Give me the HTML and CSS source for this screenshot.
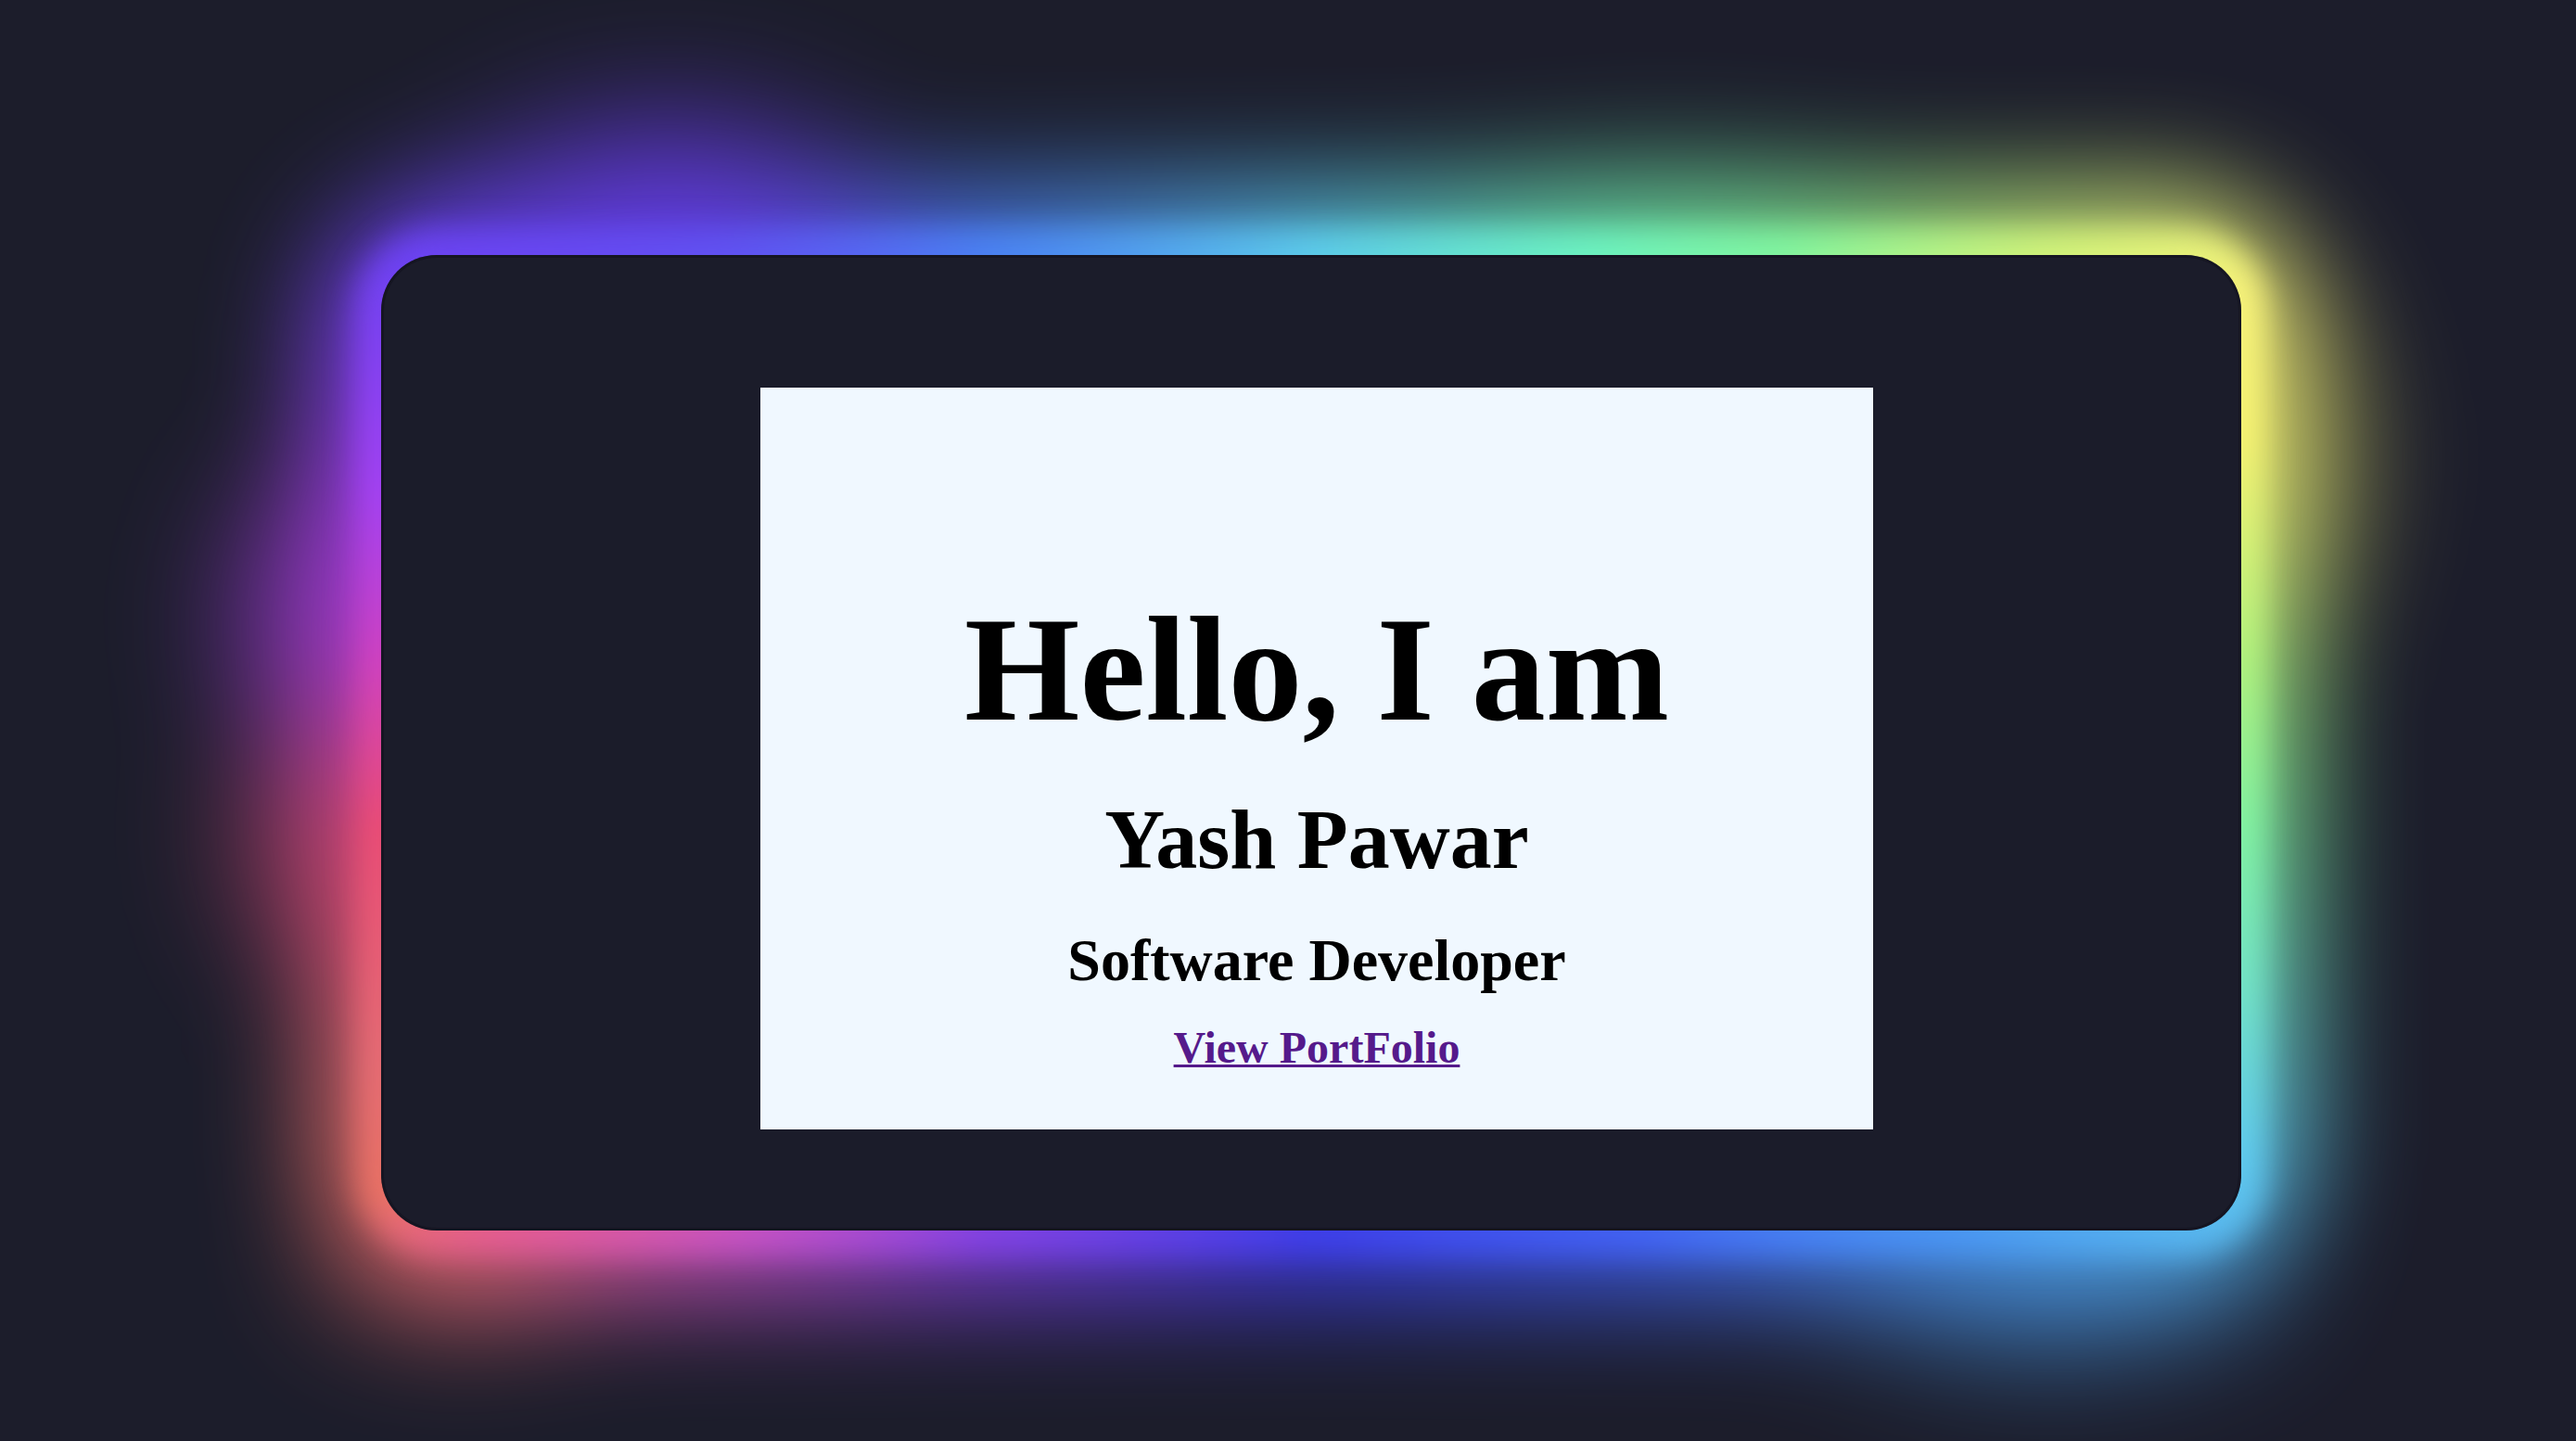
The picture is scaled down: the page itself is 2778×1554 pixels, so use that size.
FILE: index.html
```html
<!DOCTYPE html>
<html lang="en">
<head>
<meta charset="utf-8">
<title>Yash Pawar</title>
<link rel="stylesheet" href="styles.css">
</head>
<body>
  <main class="card">
    <section class="intro">
      <h1 class="hello">Hello, I am</h1>
      <h2 class="name">Yash Pawar</h2>
      <h3 class="role">Software Developer</h3>
      <p class="link-row"><a class="portfolio" href="#">View PortFolio</a></p>
    </section>
  </main>
</body>
</html>
```

FILE: styles.css
```css
html, body {
  margin: 0;
  height: 100%;
}

body {
  background: #1c1d2b;
  display: flex;
  justify-content: center;
  align-items: center;
  min-height: 100vh;
  box-sizing: border-box;
  padding: 48px 0 0 50px;
  overflow: hidden;
  font-family: "Liberation Serif", "Times New Roman", serif;
}

.card {
  position: relative;
  width: 1200px;
  height: 800px;
  padding: 143px 397px 109px 409px;
  background: #1b1c2a;
  border-radius: 60px;
  box-shadow: inset 0 0 0 3px rgba(12, 12, 22, 0.4);
  flex: none;
}

/* wide, soft halo with irregular bulges */
.card::before {
  content: "";
  position: absolute;
  inset: -250px;
  padding: 178px;
  border-radius: 330px;
  z-index: -1;
  filter: blur(60px);
  opacity: 0.92;
  background:
    radial-gradient(ellipse 280px 140px at 560px 190px, rgba(108, 60, 245, 1), rgba(108, 60, 245, 0) 100%),
    radial-gradient(ellipse 150px 220px at 190px 640px, rgba(172, 62, 236, 0.9), rgba(172, 62, 236, 0) 100%),
    radial-gradient(ellipse 150px 200px at 200px 880px, rgba(228, 76, 132, 0.85), rgba(228, 76, 132, 0) 100%),
    radial-gradient(ellipse 300px 90px at 1640px 215px, rgba(120, 240, 168, 0.6), rgba(120, 240, 168, 0) 100%),
    radial-gradient(ellipse 110px 240px at 2310px 470px, rgba(240, 240, 112, 0.7), rgba(240, 240, 112, 0) 100%),
    radial-gradient(ellipse 300px 110px at 2050px 1370px, rgba(74, 160, 240, 0.75), rgba(74, 160, 240, 0) 100%),
    radial-gradient(ellipse 200px 90px at 330px 1350px, rgba(232, 112, 96, 0.7), rgba(232, 112, 96, 0) 100%),
    conic-gradient(
      from 0deg,
      #5ac8ea 0deg,
      #6cf0b0 34deg,
      #8cf08c 46deg,
      #cdf07a 57deg,
      #f5f07a 64deg,
      #f2f070 72deg,
      #a8f080 85deg,
      #80f0a0 95deg,
      #70e0c8 105deg,
      #5ec8ea 114deg,
      #4a90f0 127deg,
      #4060f0 146deg,
      #3c3ce8 180deg,
      #8040e0 214deg,
      #c050c0 229deg,
      #e25a90 239deg,
      #e87062 244deg,
      #e46a72 251deg,
      #e84a72 265deg,
      #d040b0 275deg,
      #a040f0 285deg,
      #6a40f0 298deg,
      #6050f0 310deg,
      #4a7cf0 326deg,
      #5ac8ea 360deg
    );
  background-clip: border-box, border-box, border-box, border-box, border-box, border-box, border-box, content-box;
  background-origin: border-box, border-box, border-box, border-box, border-box, border-box, border-box, content-box;
}

/* tight, bright rim right at the card edge */
.card::after {
  content: "";
  position: absolute;
  inset: -26px;
  border-radius: 84px;
  z-index: -1;
  filter: blur(16px);
  background: conic-gradient(
    from 0deg,
    #5ccaea 0deg,
    #6cf2c0 30deg,
    #80f5a0 44deg,
    #cdf27a 56deg,
    #f7f27a 64deg,
    #f5f272 72deg,
    #b0f27e 85deg,
    #82f2a2 95deg,
    #72e2c8 105deg,
    #60caee 114deg,
    #4a96f2 127deg,
    #4262f2 146deg,
    #3e3ee8 180deg,
    #8242e2 214deg,
    #c452c4 229deg,
    #e45c92 239deg,
    #ea7264 244deg,
    #e66c74 251deg,
    #ea4c76 265deg,
    #d042c0 275deg,
    #a442f2 285deg,
    #6c42f2 298deg,
    #6052f2 310deg,
    #4a80f2 326deg,
    #5ccaea 360deg
  );
}

.intro {
  width: 1200px;
  height: 800px;
  box-sizing: border-box;
  padding-top: 223px;
  background: #f0f8ff;
  text-align: center;
  color: #000;
}

.hello {
  margin: 0;
  font-size: 160px;
  line-height: 162px;
  font-weight: bold;
}

.name {
  margin: 58px 0 0;
  font-size: 90px;
  line-height: 90px;
  font-weight: bold;
}

.role {
  margin: 53px 0 0;
  font-size: 64px;
  line-height: 64px;
  font-weight: bold;
}

.link-row {
  margin: 38px 0 0;
  font-size: 48px;
  line-height: 48px;
  font-weight: bold;
}

.portfolio {
  color: #551a8b;
  text-decoration: underline;
  text-decoration-thickness: 3px;
}
```
